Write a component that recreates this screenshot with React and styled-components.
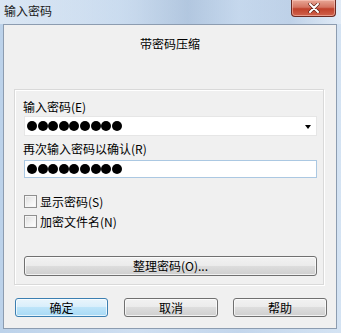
import React from 'react'
import styled, { createGlobalStyle } from 'styled-components'

const GlobalStyle = createGlobalStyle`
  html, body {
    margin: 0;
    padding: 0;
  }
  body {
    font-family: "Noto Sans CJK SC", "Liberation Sans", sans-serif;
    font-size: 12px;
    color: #000;
  }
`

const Window = styled.div`
  width: 341px;
  height: 333px;
  display: flex;
  flex-direction: column;
  background: linear-gradient(90deg, #bcd2ea 0%, #cfdff1 40%, #c3d6ec 70%, #d4e3f3 100%);
  overflow: hidden;
`

const TitleBar = styled.div`
  height: 24px;
  display: flex;
  align-items: flex-start;
  justify-content: space-between;
  padding-left: 4px;
  padding-right: 5px;
  background: linear-gradient(90deg, rgba(255,255,255,0.45) 0%, rgba(200,218,238,0.5) 35%, rgba(150,175,205,0.45) 55%, rgba(200,218,238,0.4) 70%, rgba(170,192,220,0.4) 85%, rgba(255,255,255,0.3) 100%);
`

const TitleText = styled.span`
  margin-top: 4px;
  font-size: 12px;
  line-height: 14px;
  color: #1a1a1a;
`

const CloseButton = styled.div`
  width: 45px;
  height: 17px;
  border: 1px solid #6b2a22;
  border-top: none;
  border-radius: 0 0 4px 4px;
  background: linear-gradient(180deg, #e8a796 0%, #d47461 45%, #c0412b 55%, #d0634c 100%);
  display: flex;
  align-items: center;
  justify-content: center;
  box-sizing: border-box;
  box-shadow: inset 0 0 0 1px rgba(255, 210, 200, 0.5);
`

const Client = styled.div`
  flex: 1;
  margin: 0 4px 4px 3px;
  border: 1px solid #8c9cb0;
  background: #f0f0f0;
  display: flex;
  flex-direction: column;
`

const Heading = styled.div`
  height: 14px;
  line-height: 14px;
  margin-top: 12px;
  text-align: center;
  font-size: 12px;
`

const Panel = styled.div`
  margin: 38px 12px 0 10px;
  height: 196px;
  box-sizing: border-box;
  border: 1px solid #d9d9d9;
  box-shadow: inset 1px 1px 0 #ffffff, 1px 1px 0 #ffffff;
  padding: 10px 6px 0 9px;
  display: flex;
  flex-direction: column;
`

const Label = styled.div`
  height: 14px;
  line-height: 14px;
  margin-left: -1px;
  margin-top: ${p => p.$top || 0}px;
`

const Field = styled.div`
  height: ${p => p.$h}px;
  margin-top: ${p => p.$top}px;
  box-sizing: border-box;
  background: #ffffff;
  border: 1px solid ${p => (p.$combo ? '#e6e6e6' : '#abc8e2')};
  display: flex;
  align-items: center;
  justify-content: space-between;
  padding: 0 5px 0 2px;
`

const Dots = styled.div`
  display: flex;
  gap: 0.6px;
`

const Dot = styled.span`
  width: 10px;
  height: 10px;
  border-radius: 50%;
  background: #000;
`

const Arrow = styled.span`
  width: 0;
  height: 0;
  border-left: 3.5px solid transparent;
  border-right: 3.5px solid transparent;
  border-top: 4px solid #000;
  margin-top: 1px;
`

const CheckRow = styled.label`
  display: flex;
  align-items: center;
  gap: 3px;
  height: 14px;
  margin-top: ${p => p.$top}px;
`

const Box = styled.span`
  width: 13px;
  height: 13px;
  box-sizing: border-box;
  border: 1px solid #8f8f8f;
  background: linear-gradient(135deg, #dcdcdc 0%, #f4f4f4 60%, #ffffff 100%);
  box-shadow: inset 0 0 0 1px #f5f5f5;
`

const Button = styled.div`
  box-sizing: border-box;
  height: ${p => p.$h || 19}px;
  width: ${p => (p.$w ? `${p.$w}px` : 'auto')};
  margin-top: ${p => p.$top || 0}px;
  margin-left: ${p => p.$left || 0}px;
  border: 1px solid ${p => (p.$primary ? '#3c7fb1' : '#707070')};
  border-radius: 3px;
  background: ${p =>
    p.$primary
      ? 'linear-gradient(180deg, #e9f5fc 0%, #d8eefb 49%, #bde4f9 50%, #a7d9f5 100%)'
      : 'linear-gradient(180deg, #f2f2f2 0%, #ebebeb 49%, #dddddd 50%, #cfcfcf 100%)'};
  box-shadow: inset 0 0 0 1px rgba(255, 255, 255, 0.7);
  display: flex;
  align-items: center;
  justify-content: center;
  line-height: 14px;
  font-size: 12px;
`

const Footer = styled.div`
  display: flex;
  margin-top: 13px;
  margin-left: 11px;
`

const dots = Array.from({ length: 9 })

export default function App() {
  return (
    <>
      <GlobalStyle />
      <Window>
        <TitleBar>
          <TitleText>输入密码</TitleText>
          <CloseButton>
            <svg width="12" height="10" viewBox="0 0 12 10">
              <path d="M2 1 L10 9 M10 1 L2 9" stroke="#5a1f16" strokeWidth="3.2" strokeLinecap="round" />
              <path d="M2 1 L10 9 M10 1 L2 9" stroke="#ffffff" strokeWidth="2" strokeLinecap="round" />
            </svg>
          </CloseButton>
        </TitleBar>
        <Client>
          <Heading>带密码压缩</Heading>
          <Panel>
            <Label>输入密码(E)</Label>
            <Field $combo $h={20} $top={2}>
              <Dots>
                {dots.map((_, i) => <Dot key={i} />)}
              </Dots>
              <Arrow />
            </Field>
            <Label $top={6}>再次输入密码以确认(R)</Label>
            <Field $h={18} $top={4}>
              <Dots>
                {dots.map((_, i) => <Dot key={i} />)}
              </Dots>
            </Field>
            <CheckRow $top={16}>
              <Box />
              显示密码(S)
            </CheckRow>
            <CheckRow $top={6}>
              <Box />
              加密文件名(N)
            </CheckRow>
            <Button $h={20} $top={28}>整理密码(O)...</Button>
          </Panel>
          <Footer>
            <Button $primary $w={93}>确定</Button>
            <Button $w={94} $left={16}>取消</Button>
            <Button $w={94} $left={15}>帮助</Button>
          </Footer>
        </Client>
      </Window>
    </>
  )
}
